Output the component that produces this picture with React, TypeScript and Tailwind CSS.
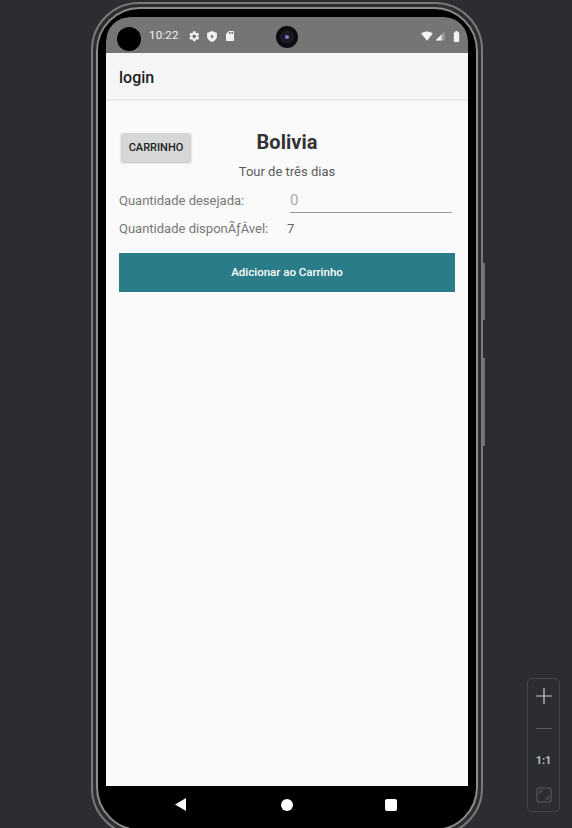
import { MdSettings, MdSdCard, MdSignalWifi4Bar, MdBatteryFull } from "react-icons/md";

function StatusBar() {
  return (
    <div className="relative flex h-[36px] shrink-0 items-center rounded-t-[24px] bg-[#757575] pl-[11px] pr-[5px] pt-[2px] text-[#f2f2f2]">
      <div className="mt-[5px] h-[24px] w-[24px] shrink-0 rounded-full bg-black" />
      <span className="ml-[8px] text-[11.5px] leading-none tracking-[0.2px]">10:22</span>
      <MdSettings className="ml-[9px]" size={12.5} />
      <svg className="ml-[7px]" width="10" height="11" viewBox="0 0 20 22">
        <path d="M10 0 L20 4 V10 C20 16 15.5 20.5 10 22 C4.5 20.5 0 16 0 10 V4 Z" fill="currentColor" />
        <path d="M8 7 L14 11 L8 15 Z" fill="#757575" />
      </svg>
      <MdSdCard className="ml-[7px]" size={12} />

      {/* front camera */}
      <div className="absolute left-[170px] top-[9px] flex h-[22px] w-[22px] items-center justify-center rounded-full bg-[#0c0c10]">
        <div className="flex h-[14px] w-[14px] items-center justify-center rounded-full bg-[#1a1a24]">
          <div className="h-[4px] w-[4px] rounded-full bg-[#8a78c8]" />
        </div>
      </div>

      <div className="ml-auto flex items-center">
        <MdSignalWifi4Bar size={12} />
        <svg className="ml-[2px]" width="10" height="10" viewBox="0 0 20 20">
          <path d="M1 19 L19 1 V19 Z" fill="currentColor" opacity="0.35" />
          <path d="M1 19 L13 7 V19 Z" fill="currentColor" />
        </svg>
        <MdBatteryFull className="ml-[5px]" size={13} />
      </div>
    </div>
  );
}

function NavBar() {
  return (
    <div className="flex h-[35px] shrink-0 items-center bg-black pl-[69px] pt-[2px]">
      <svg width="11" height="13" viewBox="0 0 11 13">
        <path d="M0 6.5 L11 0 V13 Z" fill="white" />
      </svg>
      <div className="ml-[95px] h-[12px] w-[12px] rounded-full bg-white" />
      <div className="ml-[92px] h-[12px] w-[12px] rounded-[2px] bg-white" />
    </div>
  );
}

function Conteudo() {
  return (
    <div className="flex-1 bg-[#fafafa] px-[13px] pt-[33px]">
      <div className="grid grid-cols-[1fr_auto_1fr] items-start">
        <button className="ml-[2px] h-[29px] w-[70px] rounded-[2px] bg-[#d6d7d7] text-[11px] font-medium leading-none text-[#222] shadow-[0_1px_2px_rgba(0,0,0,0.25)]">
          CARRINHO
        </button>
        <h1 className="-mt-[3px] text-[20px] font-bold leading-[24px] text-[#333]">Bolivia</h1>
        <div />
      </div>
      <p className="mt-[1px] text-center text-[13px] leading-[17px] text-[#5a5a5a]">Tour de três dias</p>

      <div className="mt-[11px] flex items-end">
        <span className="mb-[4px] w-[171px] shrink-0 text-[13px] leading-[17px] text-[#777]">
          Quantidade desejada:
        </span>
        <div className="w-[162px] border-b border-[#9a9a9a] pb-[3px] text-[15px] leading-[18px] text-[#aaa]">0</div>
      </div>

      <div className="mt-[7px] flex">
        <span className="w-[168px] shrink-0 text-[13px] leading-[17px] text-[#777]">
          Quantidade disponÃƒÂvel:
        </span>
        <span className="text-[13px] leading-[17px] text-[#666]">7</span>
      </div>

      <button className="mt-[16px] h-[39px] w-full bg-[#2b7c89] text-[11.5px] font-medium text-white">
        Adicionar ao Carrinho
      </button>
    </div>
  );
}

function Telefone() {
  return (
    <div className="relative h-[834px] w-[392px] rounded-[48px] border-2 border-[#7a7a7a] bg-[#2e2e30] p-[3px]">
      <div className="h-full rounded-[44px] border-2 border-[#8c8c8c] bg-black p-[8px]">
        <div className="flex h-full flex-col overflow-hidden rounded-[24px] bg-black">
          <StatusBar />
          <div className="relative z-10 flex h-[47px] shrink-0 items-center border-b border-[#e3e3e3] bg-[#f5f5f5] pl-[13px] pt-[3px] shadow-[0_1px_2px_rgba(0,0,0,0.06)]">
            <span className="text-[16px] font-medium text-[#1e1e1e]">login</span>
          </div>
          <Conteudo />
          <NavBar />
        </div>
      </div>
      {/* botoes laterais */}
      <div className="absolute -right-[4px] top-[259px] h-[57px] w-[2px] bg-[#707070]" />
      <div className="absolute -right-[4px] top-[354px] h-[88px] w-[2px] bg-[#707070]" />
    </div>
  );
}

function ZoomControles() {
  return (
    <div className="absolute left-[527px] top-[678px] flex w-[33px] flex-col rounded-[5px] border border-[#45474b]">
      <div className="flex h-[33px] items-center justify-center">
        <svg width="16" height="16" viewBox="0 0 16 16">
          <path d="M8 0 V16 M0 8 H16" stroke="#cfcfcf" strokeWidth="1.2" />
        </svg>
      </div>
      <div className="flex h-[33px] items-center justify-center">
        <div className="h-[1px] w-[16px] bg-[#5c5e63]" />
      </div>
      <div className="flex h-[33px] items-center justify-center text-[11px] font-bold text-[#bdbdbd]">1:1</div>
      <div className="flex h-[33px] items-center justify-center">
        <svg width="16" height="16" viewBox="0 0 16 16" fill="none" stroke="#56585d" strokeWidth="1.2">
          <rect x="1" y="1" width="14" height="14" rx="2" />
          <path d="M4 7 V4 H7 M12 9 V12 H9" />
        </svg>
      </div>
    </div>
  );
}

export default function App() {
  return (
    <div className="relative h-[828px] w-[572px] overflow-hidden bg-[#2b2d30] font-['Roboto',sans-serif]">
      <div className="pl-[91px] pt-[2px]">
        <Telefone />
      </div>
      <ZoomControles />
    </div>
  );
}
